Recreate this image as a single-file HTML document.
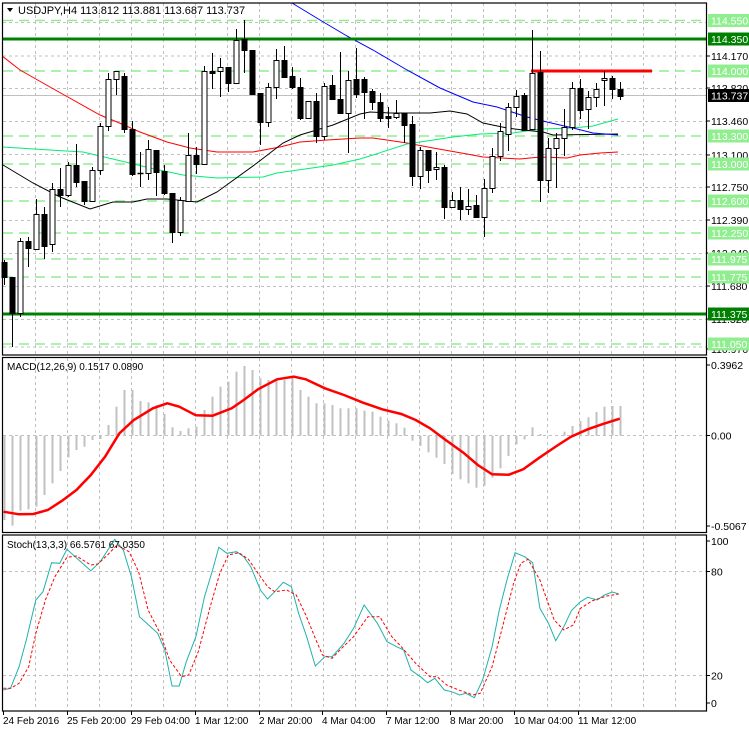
<!DOCTYPE html>
<html><head><meta charset="utf-8"><style>
html,body{margin:0;padding:0;background:#fff;width:749px;height:731px;overflow:hidden}
svg{display:block;font-family:"Liberation Sans","DejaVu Sans",sans-serif;font-size:10.5px}
</style></head><body>
<svg id="s" width="749" height="731" viewBox="0 0 749 731" xmlns="http://www.w3.org/2000/svg">
<rect width="749" height="731" fill="#fff"/>
<g id="grid" stroke="#c0c0c0" stroke-dasharray="3,3" stroke-width="1"></g>
<g id="gl" stroke="#90ee90" stroke-dasharray="10,6" stroke-width="1.5">
<line x1="3" x2="706" y1="20.5" y2="20.5"/><line x1="3" x2="706" y1="71" y2="71"/><line x1="3" x2="706" y1="136" y2="136"/><line x1="3" x2="706" y1="164" y2="164"/><line x1="3" x2="706" y1="201" y2="201"/><line x1="3" x2="706" y1="233" y2="233"/><line x1="3" x2="706" y1="259" y2="259"/><line x1="3" x2="706" y1="277" y2="277"/><line x1="3" x2="706" y1="344" y2="344"/>
</g>
<line x1="3" x2="706" y1="95.5" y2="95.5" stroke="#c0c0c0"/>
<polyline fill="none" stroke="#ff0000" stroke-width="1" points="3,56.7 20,70 50,87 100,115 117,122 140,132 167,142 190,148 217,152 253,152 280,147 300,142 327,140 360,138 373,138 407,143 433,148 467,154 483,157 520,159 540,157 567,158 580,155 600,153 618,152"/>
<polyline fill="none" stroke="#00ee77" stroke-width="1" points="3,147 50,150 83,152 117,160 150,168 183,175 217,178 263,177 277,173 333,165 360,159 373,155 407,144 453,137 480,134 513,133 540,129 573,128 593,126 618,119"/>
<polyline fill="none" stroke="#000" stroke-width="1" points="3,165 33,183 60,197 90,209 113,202 133,202 147,199 167,199 197,202 217,192 257,163 283,143 300,135 333,125 360,114 370,112 390,113 430,113 450,111 467,114 483,123 507,128 523,130 543,132 553,135 618,134"/>
<polyline fill="none" stroke="#0000ff" stroke-width="1" points="292,3 320,20 347,36 373,50 407,70 440,88 473,102 497,107 527,117 547,122 573,128 593,133 618,135"/>
<line x1="3" x2="706" y1="39" y2="39" stroke="#008000" stroke-width="3"/>
<line x1="3" x2="706" y1="314" y2="314" stroke="#008000" stroke-width="3"/>
<line x1="531" x2="652" y1="71" y2="71" stroke="#ff0000" stroke-width="3"/>
<g id="candles"></g>
<g id="macd" fill="#c0c0c0"></g>
<line x1="3" x2="706" y1="435.5" y2="435.5" stroke="#c0c0c0" stroke-dasharray="3,3"/>
<polyline id="sig" fill="none" stroke="#ff0000" stroke-width="2.5"/>
<line x1="3" x2="706" y1="571.5" y2="571.5" stroke="#c0c0c0" stroke-dasharray="3,3"/>
<line x1="3" x2="706" y1="675.5" y2="675.5" stroke="#c0c0c0" stroke-dasharray="3,3"/>
<polyline id="st1" fill="none" stroke="#20b2aa" stroke-width="1"/>
<polyline id="st2" fill="none" stroke="#ff0000" stroke-width="1" stroke-dasharray="3,2"/>
<g fill="none" stroke="#000" stroke-width="1.2">
<rect x="2.5" y="3" width="704" height="352"/>
<rect x="2.5" y="357.5" width="704" height="175"/>
<rect x="2.5" y="535" width="704" height="176"/>
</g>
<path d="M7 8 L13 8 L10 12 Z" fill="#000"/>
<text x="18" y="14" font-size="11">USDJPY,H4  113.812 113.881 113.687 113.737</text>
<text x="7" y="370" font-size="10">MACD(12,26,9) 0.1517 0.0890</text>
<text x="7" y="548" font-size="10">Stoch(13,3,3) 66.5761 67.0350</text>
<g id="axis" font-size="10.5"></g>
<g id="time" font-size="10"></g>
</svg>
<script>
var NS="http://www.w3.org/2000/svg";
function el(p,t,a,txt){var e=document.createElementNS(NS,t);for(var k in a)e.setAttribute(k,a[k]);if(txt!=null)e.textContent=txt;p.appendChild(e);return e;}
var g=document.getElementById('grid');
for(var x=35.5;x<706;x+=32){el(g,'line',{x1:x,x2:x,y1:3,y2:355});el(g,'line',{x1:x,x2:x,y1:358,y2:532});el(g,'line',{x1:x,x2:x,y1:536,y2:710});}
[22.5,56,88.5,121.5,154.5,187.5,220.5,253.5,286.5,319.5,347].forEach(function(y){el(g,'line',{x1:3,x2:706,y1:y,y2:y});});
var C=[[262,277,260,285,0],[277,313,277,347,0],[241,313,238,317,1],[241,248,237,267,0],[214,249,199,250,1],[214,246,207,259,0],[189,244,183,252,1],[189,195,168,207,0],[165,195,162,197,1],[165,182,144,187,0],[181,201,181,205,0],[170,201,167,202,1],[126,170,123,175,1],[79,126,73,131,1],[71,79,71,95,1],[76,129,73,133,0],[129,174,121,176,0],[173,174,152,187,0],[149,173,140,180,1],[150,172,150,196,0],[171,193,165,195,0],[193,232,193,243,0],[200,232,197,236,1],[155,201,133,201,1],[155,164,147,174,0],[71,164,66,164,1],[71,73,53,89,0],[67,71,58,97,1],[67,83,67,92,0],[40,83,29,83,1],[39,50,20,73,0],[50,94,50,94,0],[93,122,93,145,0],[87,122,83,127,1],[60,87,49,99,1],[60,77,46,77,0],[76,87,67,89,0],[87,118,78,120,0],[101,118,101,118,1],[101,136,93,143,0],[86,136,83,140,1],[85,99,75,99,0],[99,113,52,113,0],[80,113,71,153,1],[79,94,48,98,0],[79,92,77,119,0],[91,102,89,110,0],[102,118,93,122,0],[116,118,107,128,0],[113,117,100,119,1],[113,125,113,143,0],[124,176,116,186,0],[150,176,147,189,1],[150,170,150,183,0],[167,169,152,180,1],[167,207,165,219,0],[200,207,192,208,1],[200,209,187,220,0],[206,209,189,215,1],[205,217,195,218,0],[188,217,179,237,1],[156,188,148,193,1],[131,156,123,161,1],[107,134,103,151,1],[96,107,90,117,1],[95,130,93,131,0],[73,129,30,129,1],[72,180,51,202,0],[148,180,138,193,1],[138,148,133,188,1],[127,138,109,156,1],[88,127,82,130,1],[88,110,79,119,0],[97,109,91,129,1],[89,97,83,107,1],[78,80,71,106,1],[78,89,76,99,0],[89,96,82,100,0]];
var cg=document.getElementById('candles');
C.forEach(function(c,i){var x=4+8*i+0.5;
el(cg,'line',{x1:x,x2:x,y1:c[2],y2:c[3],stroke:'#000','stroke-width':1});
var h=Math.max(c[1]-c[0],1);
if(h<=1){el(cg,'line',{x1:x-3,x2:x+3,y1:c[0]+0.5,y2:c[0]+0.5,stroke:'#000','stroke-width':1.5});}
else el(cg,'rect',{x:x-2.5,y:c[0]+0.5,width:5,height:h,fill:c[4]?'#fff':'#000',stroke:'#000','stroke-width':1});
});
var M=[540,557,512,508,500,465,430,393,352,330,320,300,297,255,200,150,150,183,187,195,222,262,273,265,260,210,170,140,125,95,78,90,115,120,120,120,110,150,170,190,190,195,205,205,205,212,215,230,242,250,263,302,318,337,353,372,402,418,430,443,437,413,385,348,313,298,262,282,288,285,275,258,243,232,216,200,198,198];
var mg=document.getElementById('macd');
M.forEach(function(v,i){var y=340+v/3,x=4+8*i-0.5,z=435.7;el(mg,'rect',{x:x,y:Math.min(y,z),width:2,height:Math.abs(y-z)});});
function pts(a,sx,oy){return a.map(function(p){return (p[0]/sx).toFixed(1)+','+(oy+p[1]/3).toFixed(1)}).join(' ');}
document.getElementById('sig').setAttribute('points',pts([[7,515],[40,523],[70,522],[100,510],[130,482],[160,450],[190,405],[220,350],[250,280],[280,240],[320,205],[350,190],[375,200],[410,226],[445,227],[485,205],[510,180],[540,148],[580,118],[615,110],[640,118],[680,145],[720,165],[760,188],[800,208],[840,222],[870,240],[900,265],[930,297],[970,338],[1000,375],[1030,403],[1065,404],[1095,388],[1130,352],[1165,318],[1195,290],[1230,268],[1260,253],[1297,236]],2.093,340));
document.getElementById('st1').setAttribute('points',pts([[7,510],[22,505],[40,440],[55,360],[75,240],[90,215],[108,128],[125,130],[140,88],[165,120],[190,152],[210,125],[240,58],[258,90],[275,170],[292,290],[330,340],[345,390],[360,498],[375,498],[390,425],[410,350],[428,230],[445,150],[458,82],[475,100],[495,95],[510,110],[525,140],[545,210],[560,237],[575,215],[593,187],[610,200],[625,280],[642,350],[660,438],[680,410],[695,410],[720,370],[740,325],[762,255],[790,310],[810,365],[830,380],[845,390],[860,450],[880,470],[895,488],[910,475],[930,510],[945,515],[962,525],[975,520],[993,533],[1010,480],[1030,380],[1045,270],[1062,175],[1078,98],[1098,110],[1115,128],[1130,265],[1148,310],[1163,362],[1180,320],[1196,272],[1215,245],[1230,232],[1250,240],[1265,225],[1282,216],[1295,222]],2.093,520));
document.getElementById('st2').setAttribute('points',pts([[7,505],[22,505],[40,490],[60,440],[75,340],[95,240],[115,170],[140,112],[160,108],[190,135],[205,132],[225,105],[245,75],[270,95],[290,155],[310,270],[335,340],[355,420],[380,470],[395,465],[415,395],[440,260],[460,160],[478,105],[500,98],[520,118],[540,160],[560,200],[575,215],[600,210],[620,225],[640,285],[660,355],[675,405],[695,415],[715,385],[740,350],[770,290],[795,290],[820,350],[840,380],[870,430],[900,470],[915,470],[935,495],[960,510],[990,525],[1005,520],[1030,440],[1050,330],[1075,190],[1090,130],[1105,118],[1130,180],[1160,300],[1180,330],[1200,315],[1215,265],[1240,242],[1270,228],[1295,222]],2.093,520));
var ax=document.getElementById('axis');
function lab(y,t){el(ax,'line',{x1:706,x2:710,y1:y,y2:y,stroke:'#000'});el(ax,'text',{x:711,y:y+4},t);}
[[56,'114.170'],[88,'113.820'],[121,'113.460'],[155,'113.100'],[187,'112.750'],[220,'112.390'],[253,'112.040'],[286,'111.680'],[319,'111.320'],[349,'110.970'],[365,'0.3962'],[435.5,'0.00'],[526,'-0.5067'],[541,'100'],[571.5,'80'],[675.5,'20'],[703,'0']].forEach(function(a){lab(a[0],a[1]);});
function box(y,t,bg,fg){el(ax,'rect',{x:708,y:y-6.5,width:41,height:13,fill:bg});el(ax,'text',{x:711,y:y+4,fill:fg},t);}
[[20.5,'114.550'],[71,'114.000'],[136,'113.300'],[164,'113.000'],[201,'112.600'],[233,'112.250'],[259,'111.975'],[277,'111.775'],[344,'111.050']].forEach(function(a){box(a[0],a[1],'#90ee90','#fff');});
box(39,'114.350','#008000','#fff');box(314,'111.375','#008000','#fff');box(95.5,'113.737','#000','#fff');
var tg=document.getElementById('time');
[[2,'24 Feb 2016'],[66,'25 Feb 20:00'],[130,'29 Feb 04:00'],[194,'1 Mar 12:00'],[258,'2 Mar 20:00'],[321,'4 Mar 04:00'],[385,'7 Mar 12:00'],[449,'8 Mar 20:00'],[513,'10 Mar 04:00'],[577,'11 Mar 12:00']].forEach(function(a){el(tg,'line',{x1:a[0]+1.5,x2:a[0]+1.5,y1:711,y2:715,stroke:'#000'});el(tg,'text',{x:a[0]+1,y:724},a[1]);});
</script>
</body></html>
